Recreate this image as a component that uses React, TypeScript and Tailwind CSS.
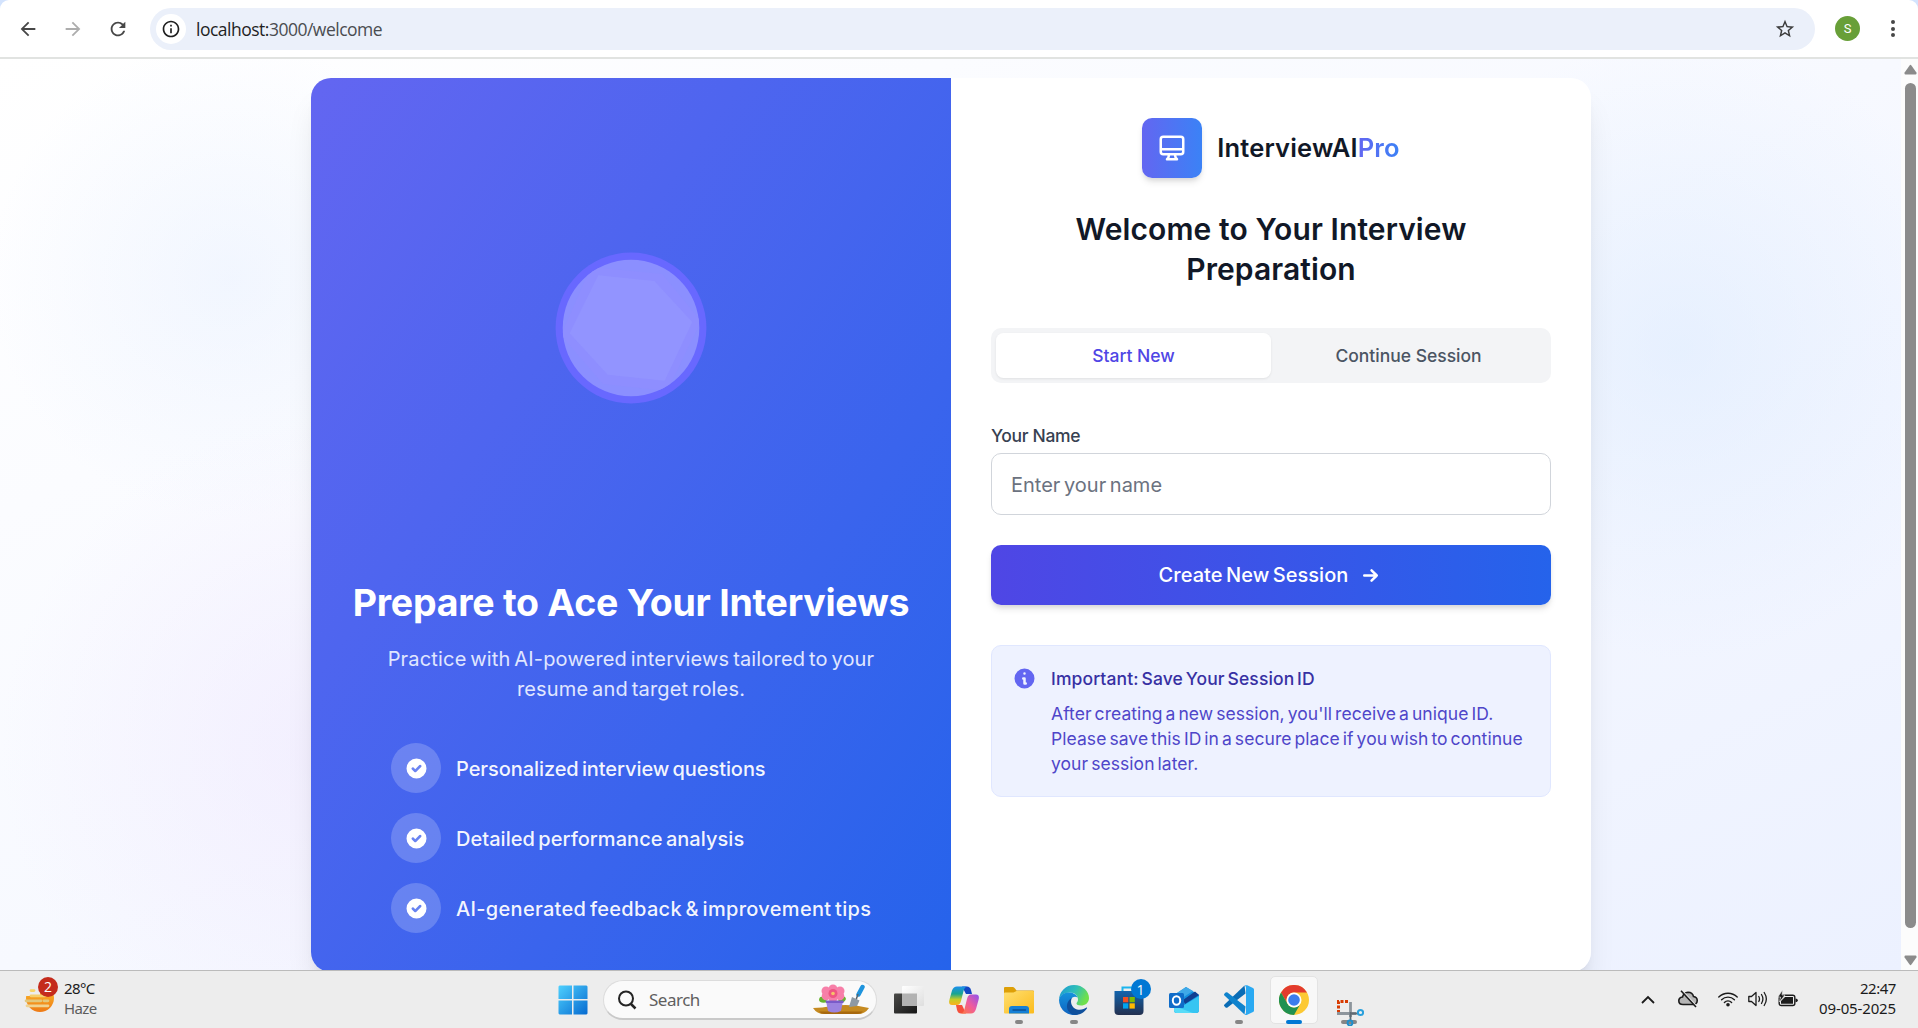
import type { ReactNode } from "react";
import { MdArrowBack, MdArrowForward, MdInfoOutline, MdRefresh, MdStarBorder } from "react-icons/md";

function BrowserBar() {
  return (
    <div className="h-[59px] shrink-0 bg-[#d3e3fd]">
      <div className="flex h-[59px] items-start rounded-t-[9px] border-b-2 border-[#e1e3e1] bg-white">
        <div className="flex h-[57px] w-[150px] shrink-0 items-center pl-[17px] text-[22px]">
          <MdArrowBack className="text-[#474747]" />
          <MdArrowForward className="ml-[23px] text-[#adadad]" />
          <MdRefresh className="ml-[23px] text-[#474747]" />
        </div>
        <div className="mt-2 flex h-[42px] w-[1665px] items-center rounded-full bg-[#ebf0fa] pl-[6px] pr-[19px]">
          <div className="flex size-[30px] items-center justify-center rounded-full bg-white">
            <MdInfoOutline className="size-[20px] text-[#1f1f1f]" />
          </div>
          <div className="ml-[10px] pt-px font-['Open_Sans',sans-serif] text-[17.5px] tracking-[-0.5px] text-[#1f1f1f]">
            localhost:<span className="text-[#4a4c50]">3000/welcome</span>
          </div>
          <MdStarBorder className="ml-auto size-[22px] text-[#3c3c3c]" />
        </div>
        <div className="ml-5 mt-4 flex size-[25px] items-center justify-center rounded-full bg-[#689f38] font-['Roboto',sans-serif] text-[13px] text-white">
          S
        </div>
        <div className="ml-[31px] mt-5 flex flex-col gap-[2.7px]">
          <i className="size-1 rounded-full bg-[#474747]" />
          <i className="size-1 rounded-full bg-[#474747]" />
          <i className="size-1 rounded-full bg-[#474747]" />
        </div>
      </div>
    </div>
  );
}

function Orb() {
  return (
    <svg width="152" height="152" viewBox="0 0 152 152">
      <defs>
        <clipPath id="orb">
          <circle cx="76" cy="76" r="68.3" />
        </clipPath>
      </defs>
      <circle cx="76" cy="76" r="75.4" fill="#6868ff" />
      <circle cx="76" cy="76" r="68.3" fill="#8b8fff" />
      <g clipPath="url(#orb)">
        <polygon points="36,15 107,22 146,69 112,139 48,132 6,83" fill="#8e8eff" />
        <polygon points="43.3,23.3 99.3,29 137.3,70 109.7,128.7 52.7,122.7 14.7,81.3" fill="#9294ff" />
      </g>
    </svg>
  );
}

function Feature({ children, spacing }: { children: ReactNode; spacing: string }) {
  return (
    <li className="flex items-center gap-[15px]">
      <span className="flex size-[50px] items-center justify-center rounded-full bg-white/20">
        <svg className="size-[25px]" viewBox="0 0 20 20" fill="white">
          <path
            fillRule="evenodd"
            d="M10 18a8 8 0 100-16 8 8 0 000 16zm3.707-9.293a1 1 0 00-1.414-1.414L9 10.586 7.707 9.293a1 1 0 00-1.414 1.414l2 2a1 1 0 001.414 0l4-4z"
          />
        </svg>
      </span>
      <span className={"pt-px text-[20px] font-[450] text-white/95 [word-spacing:-2px] " + spacing}>{children}</span>
    </li>
  );
}

function IntroPanel() {
  return (
    <section className="flex w-[640px] flex-col items-center bg-[linear-gradient(to_bottom_right,#6366f1,#2563eb)] pt-10 text-white">
      <div className="flex h-[420px] items-center">
        <Orb />
      </div>
      <h2 className="mt-[42px] whitespace-nowrap text-[37.5px] font-bold leading-[45px] tracking-[-0.27px]">
        Prepare to Ace Your Interviews
      </h2>
      <p className="mt-[19px] whitespace-nowrap text-center text-[20px] leading-[30px] tracking-[0.17px] text-[#e0e7ff] [word-spacing:-2px]">
        Practice with AI-powered interviews tailored to your
        <br />
        resume and target roles.
      </p>
      <ul className="mt-[39px] flex w-full flex-col gap-5 whitespace-nowrap pl-20">
        <Feature spacing="tracking-[-0.07px]">Personalized interview questions</Feature>
        <Feature spacing="tracking-[0.04px]">Detailed performance analysis</Feature>
        <Feature spacing="tracking-[0.31px]">AI-generated feedback &amp; improvement tips</Feature>
      </ul>
    </section>
  );
}

function FormPanel() {
  return (
    <section className="w-[640px] bg-white p-10">
      <div className="flex items-center justify-center gap-[15px]">
        <div className="flex size-[60px] items-center justify-center rounded-[10px] bg-[linear-gradient(to_right,#6366f1,#3b82f6)] shadow-[0_5px_7.5px_-1px_rgba(0,0,0,0.1),0_2.5px_5px_-2px_rgba(0,0,0,0.1)]">
          <svg className="size-[30px]" viewBox="0 0 24 24" fill="none" stroke="white" strokeWidth="2" strokeLinecap="round" strokeLinejoin="round">
            <path d="M9.75 17L9 20l-1 1h8l-1-1-.75-3M3 13h18M5 17h14a2 2 0 002-2V5a2 2 0 00-2-2H5a2 2 0 00-2 2v10a2 2 0 002 2z" />
          </svg>
        </div>
        <div className="text-[25.5px] font-semibold leading-[36px] tracking-[0.15px] text-[#111827]">
          InterviewAI
          <span className="bg-[linear-gradient(to_right,#6366f1,#3b82f6)] bg-clip-text text-transparent">Pro</span>
        </div>
      </div>
      <h1 className="mt-[31px] text-center text-[30px] font-semibold leading-[40px] tracking-[0.1px] text-[#111827]">
        Welcome to Your Interview
        <br />
        Preparation
      </h1>
      <div className="mt-[39px] flex h-[55px] rounded-[10px] bg-[#f3f4f6] p-[5px] text-[17.5px] font-[450]">
        <button className="flex-1 rounded-[7.5px] bg-white pt-px text-[#4f46e5] shadow-[0_1px_2.5px_rgba(0,0,0,0.08)]">Start New</button>
        <button className="flex-1 pt-px text-[#4b5563]">Continue Session</button>
      </div>
      <label className="mt-10 block text-[17.5px] font-[450] leading-[25px] tracking-[-0.33px] text-[#374151]">Your Name</label>
      <input
        className="mt-[5px] block h-[62px] w-full rounded-[10px] border border-[#d1d5db] bg-white px-[19px] pt-px text-[20px] text-[#111827] [word-spacing:-2px] placeholder:text-[#6b7280]"
        placeholder="Enter your name"
      />
      <button className="mt-[30px] flex h-[60px] w-full items-center justify-center gap-[10px] rounded-[10px] bg-[linear-gradient(to_right,#4f46e5,#2563eb)] text-[20px] font-medium tracking-[0.06px] text-white shadow-[0_5px_7.5px_-1px_rgba(0,0,0,0.1),0_2.5px_5px_-2px_rgba(0,0,0,0.1)] [word-spacing:-2px]">
        <span>Create New Session</span>
        <svg className="size-[25px]" viewBox="0 0 24 24" fill="none" stroke="white" strokeWidth="2.4" strokeLinecap="round" strokeLinejoin="round">
          <path d="M13 7l5 5m0 0l-5 5m5-5H6" />
        </svg>
      </button>
      <div className="mt-10 flex h-[152px] gap-[15px] rounded-[10px] border border-[#e0e7ff] bg-[#eef2ff] p-5">
        <svg className="size-[25px] shrink-0" viewBox="0 0 20 20" fill="#6366f1">
          <path
            fillRule="evenodd"
            d="M18 10a8 8 0 11-16 0 8 8 0 0116 0zm-7-4a1 1 0 11-2 0 1 1 0 012 0zM9 9a1 1 0 000 2v3a1 1 0 001 1h1a1 1 0 100-2v-3a1 1 0 00-1-1H9z"
          />
        </svg>
        <div className="-ml-px whitespace-nowrap text-[17.5px] leading-[25px] [word-spacing:-2px]">
          <h3 className="font-[450] tracking-[0.12px] text-[#3730a3]">Important: Save Your Session ID</h3>
          <p className="mt-[10px] tracking-[0.06px] text-[#4f46c9]">
            After creating a new session, you'll receive a unique ID.
            <br />
            Please save this ID in a secure place if you wish to continue
            <br />
            your session later.
          </p>
        </div>
      </div>
    </section>
  );
}

function Scrollbar() {
  return (
    <div className="flex h-full w-[17px] flex-col items-center bg-[#fcfcfc] pl-0.5">
      <svg className="mt-[5px] h-[11px] w-[13px] shrink-0" viewBox="0 0 13 11">
        <path d="M5.6 1.4Q6.5.2 7.4 1.4L12.4 8.4Q13 10.3 11.6 10.5H1.4Q0 10.3.6 8.4Z" fill="#8b8b8b" />
      </svg>
      <div className="mt-2 h-[845px] w-[11px] rounded-full bg-[#8b8b8b]" />
      <svg className="mt-[27px] h-[11px] w-[13px] shrink-0" viewBox="0 0 13 11">
        <path d="M5.6 9.6Q6.5 10.8 7.4 9.6L12.4 2.6Q13 .7 11.6.5H1.4Q0 .7.6 2.6Z" fill="#8b8b8b" />
      </svg>
    </div>
  );
}

function WeatherIcon() {
  return (
    <svg width="36" height="38" viewBox="0 0 36 38">
      <defs>
        <linearGradient id="sun" x1="0" y1="0" x2="0" y2="1">
          <stop offset="0" stopColor="#fdc42d" />
          <stop offset="1" stopColor="#ee7a16" />
        </linearGradient>
      </defs>
      <circle cx="16" cy="22" r="14" fill="url(#sun)" />
      <path d="M0 6H32V16H16V20H0Z" fill="#ededed" />
      <g strokeLinecap="round" strokeWidth="2.7">
        <path d="M7 14.6H10" stroke="#f8d568" />
        <path d="M7 19.8H21" stroke="#f5cf6e" />
        <path d="M2 24.8H17M20 24.8H24" stroke="#e3c87c" />
        <path d="M3 29.8H24" stroke="#f0d391" />
      </g>
      <circle cx="24" cy="11" r="10" fill="#c42b1c" />
      <text x="24" y="16" textAnchor="middle" fontFamily="Open Sans" fontSize="14" fill="white">
        2
      </text>
    </svg>
  );
}

function FlowerPot() {
  return (
    <svg width="58" height="32" viewBox="0 0 58 32">
      <path d="M1 24Q10 24 20 22Q38 19 57 24Q53 30 46 30H12Q5 30 1 24Z" fill="#c58a20" />
      <path d="M7 27.5H51Q49 30 45 30H13Q9 30 7 27.5Z" fill="#a8690f" />
      <path d="M15 17Q8 9 7 16Q8 20 16 18ZM26 17Q33 9 34 15Q32 20 26 18Z" fill="#67b32e" />
      <g fill="#f77fa8">
        <circle cx="21" cy="5" r="4.5" />
        <circle cx="28" cy="7" r="4.5" />
        <circle cx="28" cy="12" r="4.3" />
        <circle cx="21" cy="14" r="4.5" />
        <circle cx="14" cy="12" r="4.3" />
        <circle cx="14" cy="7" r="4.5" />
      </g>
      <circle cx="21" cy="9.5" r="4.5" fill="#ee5683" />
      <circle cx="21" cy="9.5" r="1.8" fill="#f6c26a" />
      <path d="M14 17H31L29 27Q22 30 16 27Z" fill="#9c83e0" />
      <path d="M13.500 16.500H31.500V19H14Z" fill="#7a5bc9" />
      <path d="M46.500 10.500L50.500 3" stroke="#1f94dd" strokeWidth="4.500" strokeLinecap="round" />
      <path d="M46 10L44 16" stroke="#59636b" strokeWidth="1.500" />
      <path d="M40 13L47.500 16.500L45 22L37 23Z" fill="#8d99a3" />
    </svg>
  );
}

function Cell({ children, dot, active }: { children: ReactNode; dot?: "gray" | "blue" | "wide"; active?: boolean }) {
  return (
    <div className="flex h-[57px] w-[55px] shrink-0 flex-col items-center pt-[5px]">
      <div className={active ? "flex h-[48px] w-[48px] items-center justify-center rounded-[5px] border border-[#e3e3e3] bg-[#f8f8f8]" : "flex h-[48px] w-[48px] items-center justify-center"}>
        {children}
      </div>
      {dot === "gray" && <i className="-mt-[4px] h-1 w-2 rounded-full bg-[#868686]" />}
      {dot === "wide" && <i className="-mt-[4px] h-1 w-4 rounded-full bg-[#868686]" />}
      {dot === "blue" && <i className="-mt-[4px] h-1 w-4 rounded-full bg-[#0078d4]" />}
    </div>
  );
}

function WindowsIcon() {
  return (
    <svg width="30" height="30" viewBox="0 0 30 30">
      <defs>
        <linearGradient id="win" x1="0" y1="0" x2="30" y2="30" gradientUnits="userSpaceOnUse">
          <stop offset="0" stopColor="#4fd2ff" />
          <stop offset="1" stopColor="#0568cf" />
        </linearGradient>
      </defs>
      <path d="M1.500.5H14V14H.5V1.500ZM15.500.5H28.500L29.500 1.500V14H15.500ZM.5 15.500H14V29.500H1.500L.5 28.500ZM15.500 15.500H29.500V28.500L28.500 29.500H15.500Z" fill="url(#win)" />
    </svg>
  );
}

function TaskViewIcon() {
  return (
    <svg width="30" height="30" viewBox="0 0 30 30">
      <defs>
        <linearGradient id="tv" x1="0" y1="0" x2="1" y2="1">
          <stop offset="0" stopColor="#4a4a48" />
          <stop offset="1" stopColor="#161616" />
        </linearGradient>
        <linearGradient id="tvl" x1="0" y1="0" x2="1" y2="1">
          <stop offset="0" stopColor="#fff" />
          <stop offset="1" stopColor="#dedede" />
        </linearGradient>
      </defs>
      <rect x="0" y="8.500" width="23" height="20" rx="1" fill="url(#tv)" />
      <rect x="8" y="1" width="22" height="20" rx="1" fill="url(#tvl)" />
      <rect x="8" y="8.500" width="15" height="12.500" fill="#b2b2b2" />
    </svg>
  );
}

function CopilotIcon() {
  return (
    <svg width="30" height="28" viewBox="0 0 30 28">
      <defs>
        <linearGradient id="cpa" x1="0" y1="0" x2="0" y2="1">
          <stop offset="0" stopColor="#1c8fee" />
          <stop offset=".4" stopColor="#17a58f" />
          <stop offset=".7" stopColor="#c3cc26" />
          <stop offset="1" stopColor="#fbb01e" />
        </linearGradient>
        <linearGradient id="cpb" x1="1" y1="0" x2="0" y2="1">
          <stop offset="0" stopColor="#8f52ee" />
          <stop offset=".5" stopColor="#ef5c9e" />
          <stop offset="1" stopColor="#fd7a3f" />
        </linearGradient>
      </defs>
      <path d="M13 .5H18Q21 .5 22 4L23 8H17L13 .5Z" fill="#1347c4" />
      <path d="M17 27.500H12Q9 27.500 8 24L7 19H13L17 27.500Z" fill="#f4503b" />
      <path d="M8 .5H18Q15.500 1 14.500 5L12 15Q11 19 8 19H3Q-1 19 .5 13.500L3 4.500Q4.500.5 8 .5Z" fill="url(#cpa)" />
      <path d="M22 27.500H12Q14.500 27 15.500 23L18 13Q19 8.500 22 8.500H27Q31 8.500 29.500 14L27 23Q25.500 27.500 22 27.500Z" fill="url(#cpb)" />
    </svg>
  );
}

function FolderIcon() {
  return (
    <svg width="30" height="28" viewBox="0 0 30 28">
      <defs>
        <linearGradient id="fold" x1="0" y1="0" x2="1" y2="1">
          <stop offset="0" stopColor="#ffdf70" />
          <stop offset="1" stopColor="#fbbb1c" />
        </linearGradient>
      </defs>
      <path d="M0 2Q0 1 1 1H9Q10 1 11 2.500L12.500 4.500H29Q30 4.500 30 5.500V12H0Z" fill="#dd9f07" />
      <path d="M0 7.500Q0 6.500 1 6.500H9.500L12.500 5H29Q30 5 30 6V26.500Q30 27.500 29 27.500H1Q0 27.500 0 26.500Z" fill="url(#fold)" />
      <path d="M5 27.500V23Q5 20 8 20H22Q25 20 25 23V27.500Z" fill="#1580d6" />
      <path d="M9 24H21.500" stroke="#0b4f94" strokeWidth="1.300" strokeLinecap="round" />
    </svg>
  );
}

function EdgeIcon() {
  return (
    <svg width="30" height="30" viewBox="0 0 30 30">
      <defs>
        <linearGradient id="eda" x1="0" y1="0" x2="1" y2=".4">
          <stop offset="0" stopColor="#1b96d8" />
          <stop offset=".55" stopColor="#2fbfb8" />
          <stop offset="1" stopColor="#6fe04c" />
        </linearGradient>
        <linearGradient id="edb" x1="0" y1="0" x2="0" y2="1">
          <stop offset="0" stopColor="#1593dd" />
          <stop offset="1" stopColor="#0f63c0" />
        </linearGradient>
      </defs>
      <path d="M0 15A15 15 0 0 1 15 0C24 0 30 6.500 30 13C30 18 26 20.500 22 20.500C19 20.500 17.500 19.500 17.500 18.500C17.500 17.500 19 17 19 14.500C19 11 16 7.500 11 7.500C5 7.500 1 11 0 15Z" fill="url(#eda)" />
      <path d="M0 15C1 10 5 7.500 10 7.500C14 7.500 17.500 9.500 18.500 12.500C17 11.500 15 11.500 13.500 12.500C10 15 11.500 21 15 25L19 29.400A15 15 0 0 1 0 15Z" fill="url(#edb)" />
      <path d="M13 13C10.500 17 13 23 18 24.500C22 25.500 25.500 24 27.500 22.500C28 22.500 28.300 22.800 28 23.300C25.500 27.500 21 30 16 30C10 29 7.500 24.500 8 20C8.300 17 10.500 14 13 13Z" fill="#10509c" />
    </svg>
  );
}

function StoreIcon() {
  return (
    <div className="relative h-[30px] w-[30px]">
      <svg width="30" height="30" viewBox="0 0 30 30">
        <defs>
          <linearGradient id="store" x1="0" y1="0" x2="0" y2="1">
            <stop offset="0" stopColor="#1264ad" />
            <stop offset="1" stopColor="#23304f" />
          </linearGradient>
        </defs>
        <path d="M8.500 7V2.500H21V7" fill="none" stroke="#1cb5ee" strokeWidth="2" />
        <path d="M.5 6H29.500V26Q29.500 30 25.500 30H4.500Q.5 30 .5 26Z" fill="url(#store)" />
        <path d="M9 12H14.300V17.300H9Z" fill="#f25022" />
        <path d="M15.500 12H20.800V17.300H15.500Z" fill="#7fba00" />
        <path d="M9 18.300H14.300V23.600H9Z" fill="#00a4ef" />
        <path d="M15.500 18.300H20.800V23.600H15.500Z" fill="#ffb900" />
      </svg>
      <span className="absolute -right-[7px] -top-[6px] flex size-5 items-center justify-center rounded-full bg-[#0078d4] font-['Open_Sans',sans-serif] text-[14px] text-white">
        1
      </span>
    </div>
  );
}

function OutlookIcon() {
  return (
    <svg width="30" height="28" viewBox="0 0 30 28">
      <path d="M5 9L17 1L30 9V24Q30 27 27 27H8Q5 27 5 24Z" fill="#1490df" />
      <path d="M5 9L17 1L24 5L10 14Z" fill="#3fa9e8" />
      <path d="M14 14L26 5.500L30 9L16 18Z" fill="#103f91" />
      <path d="M12 21L30 10V24Q30 27 27 27H8Q5 27 5 24V20Z" fill="#36c5f2" />
      <path d="M5 20L24 27H8Q5 27 5 24Z" fill="#58dcf8" />
      <rect x="0" y="7" width="15" height="15" rx="1.500" fill="#0f6cc9" />
      <ellipse cx="7.500" cy="14.500" rx="3.700" ry="4.200" fill="none" stroke="white" strokeWidth="2" />
    </svg>
  );
}

function CodeIcon() {
  return (
    <svg width="30" height="30" viewBox="0 0 30 30">
      <path d="M21.500 8.500L3.500 22.500Q2.500 23.200 1.600 22.400L.4 21.300Q-.4 20.400.5 19.500L20.500.5Z" fill="#0a6cb5" />
      <path d="M21.500 21.500L3.500 7.500Q2.500 6.800 1.600 7.600L.4 8.700Q-.4 9.600.5 10.500L20.500 29.500Z" fill="#0f83cd" />
      <path d="M21.800.3Q22.500 0 23.200.3L29 3Q30 3.500 30 4.600V25.400Q30 26.500 29 27L23.200 29.700Q21.500 30.300 20.300 29.200Q22 29.500 22 27.500V2.500Q22 .7 20.300.8Z" fill="#29a9f2" />
    </svg>
  );
}

function ChromeIcon() {
  return (
    <svg width="30" height="30" viewBox="0 0 30 30">
      <circle cx="15" cy="15" r="15" fill="#fcc934" />
      <path d="M2 7.500A15 15 0 0 1 28 7.500H15A7.500 7.500 0 0 0 8.500 18.750Z" fill="#e33b2e" />
      <path d="M2 7.500L8.500 18.750A7.500 7.500 0 0 0 21.500 18.750L15 30A15 15 0 0 1 2 7.500Z" fill="#219150" />
      <circle cx="15" cy="15" r="7.500" fill="white" />
      <circle cx="15" cy="15" r="5.800" fill="#3b7ded" />
    </svg>
  );
}

function SnipIcon() {
  return (
    <svg className="relative left-0 top-[11px]" width="30" height="30" viewBox="0 0 30 30">
      <path d="M4.500 17V5.500H14" fill="none" stroke="#d83b01" strokeWidth="3" strokeDasharray="3 1.500" />
      <path d="M16.500 6V21M3 17.500H22" fill="none" stroke="#8d959c" strokeWidth="2.800" />
      <path d="M16.500 16V24M16 17.500H24" fill="none" stroke="#5f6a73" strokeWidth="1.800" />
      <circle cx="26.500" cy="16.500" r="2.600" fill="none" stroke="#2aa0dc" strokeWidth="2" />
      <circle cx="16" cy="27" r="2.400" fill="none" stroke="#1f8ecb" strokeWidth="2" />
    </svg>
  );
}

function Tray() {
  return (
    <div className="ml-auto flex h-[56px] items-center text-[#1b1b1b]">
      <svg className="mr-[23px]" width="14" height="9" viewBox="0 0 14 9">
        <path d="M1 8L7 2L13 8" fill="none" stroke="currentColor" strokeWidth="1.800" />
      </svg>
      <svg className="mr-5" width="20" height="18" viewBox="0 0 20 18">
        <path d="M5 14.500Q.8 14.500.8 10.800Q.8 7.600 4.500 7Q5.500 2.500 10 2.200Q14.500 2.300 15.500 6.500Q19.400 7.200 19.200 10.800Q19 14.500 15 14.500Z" fill="#b5b5b5" stroke="currentColor" strokeWidth="1.600" />
        <path d="M4.500 1L19.300 17" stroke="#ededed" strokeWidth="1.500" />
        <path d="M3 .8L18 17" stroke="currentColor" strokeWidth="1.600" />
      </svg>
      <svg className="mr-[10px]" width="20" height="16" viewBox="0 0 20 16">
        <g fill="none" stroke="currentColor" strokeWidth="1.400" strokeLinecap="round">
          <path d="M.8 6A13 13 0 0 1 19.200 6" />
          <path d="M3.600 8.800A9 9 0 0 1 16.400 8.800" />
          <path d="M6.400 11.500A5.200 5.200 0 0 1 13.600 11.500" />
        </g>
        <circle cx="10" cy="13.700" r="1.800" fill="currentColor" />
      </svg>
      <svg className="mr-[10px]" width="20" height="18" viewBox="0 0 20 18">
        <g fill="none" stroke="currentColor" strokeWidth="1.300" strokeLinecap="round" strokeLinejoin="round">
          <path d="M.8 6.500H3.500L8 2.500V15.500L3.500 11.500H.8Z" />
          <path d="M10.800 6.500Q12.200 9 10.800 11.500M13.500 4.500Q16.300 9 13.500 13.500M16.200 2.500Q20.500 9 16.200 15.500" />
        </g>
      </svg>
      <svg width="20" height="18" viewBox="0 0 20 18">
        <rect x="1.200" y="5.200" width="15.600" height="10.300" rx="2" fill="none" stroke="currentColor" strokeWidth="1.400" />
        <path d="M17.500 8.500Q19.800 8.500 19.800 10.300Q19.800 12.200 17.500 12.200Z" fill="currentColor" />
        <path d="M7 7H15V13.700H3V11Z" fill="currentColor" />
        <path d="M4.500 0L0 7H2.500L1.500 12L7 5H4Z" fill="currentColor" stroke="#ededed" strokeWidth=".6" />
      </svg>
      <div className="ml-[17px] mr-[22px] w-[81px] pb-0.5 text-right text-[15px] leading-5 tracking-[-0.45px]">
        <div>22:47</div>
        <div className="tracking-[-0.14px]">09-05-2025</div>
      </div>
    </div>
  );
}

function Taskbar() {
  return (
    <div className="flex h-[58px] shrink-0 items-start border-t border-[#bbbbbb] bg-[#ededed] font-['Noto_Sans',sans-serif]">
      <div className="flex h-full w-[545px] items-start pl-6 pt-[5px]">
        <WeatherIcon />
        <div className="ml-1 pt-0.5 text-[15px] leading-5 tracking-[-0.6px]">
          <div className="text-[#1b1b1b]">28°C</div>
          <div className="text-[#5c5c5c]">Haze</div>
        </div>
      </div>
      <Cell>
        <WindowsIcon />
      </Cell>
      <div className="ml-[3px] mr-1 mt-[9px] flex h-[40px] w-[274px] shrink-0 items-center rounded-full border border-b-2 border-[#dcdcdc] border-b-[#c9c9c9] bg-[#fafafa] pl-[13px] pr-[6px]">
        <svg width="20" height="20" viewBox="0 0 20 20" fill="none" stroke="#242424" strokeWidth="2">
          <circle cx="9" cy="8.500" r="7" />
          <path d="M13.500 13.500L18.500 18.500" strokeWidth="2.500" />
        </svg>
        <span className="ml-3 text-[17px] tracking-[-0.5px] text-[#5f5f5f]">Search</span>
        <span className="ml-auto">
          <FlowerPot />
        </span>
      </div>
      <Cell>
        <TaskViewIcon />
      </Cell>
      <Cell>
        <CopilotIcon />
      </Cell>
      <Cell dot="gray">
        <FolderIcon />
      </Cell>
      <Cell dot="gray">
        <EdgeIcon />
      </Cell>
      <Cell>
        <StoreIcon />
      </Cell>
      <Cell>
        <OutlookIcon />
      </Cell>
      <Cell dot="gray">
        <CodeIcon />
      </Cell>
      <Cell dot="blue" active>
        <ChromeIcon />
      </Cell>
      <Cell dot="wide">
        <SnipIcon />
      </Cell>
      <Tray />
    </div>
  );
}

export default function App() {
  return (
    <div className="flex h-[1028px] w-[1918px] flex-col overflow-hidden bg-white">
      <BrowserBar />
      <div className="flex h-[911px] shrink-0 overflow-hidden">
        <main className="flex h-full w-[1901px] items-start bg-[radial-gradient(circle_at_230px_220px,rgba(219,232,254,0.32),transparent_240px),radial-gradient(circle_at_330px_690px,rgba(237,228,254,0.5),transparent_330px),radial-gradient(circle_at_1680px_290px,rgba(219,234,254,0.55),transparent_310px),linear-gradient(to_bottom_right,#ffffff,#f7f9ff_50%,#ecf1ff)] pl-[311px] pt-[19px] font-['Inter',sans-serif]">
          <div className="flex h-[894px] w-[1280px] overflow-hidden rounded-[20px] shadow-[0_25px_31px_-6px_rgba(0,0,0,0.1),0_10px_12px_-7px_rgba(0,0,0,0.1)]">
            <IntroPanel />
            <FormPanel />
          </div>
        </main>
        <Scrollbar />
      </div>
      <Taskbar />
    </div>
  );
}
